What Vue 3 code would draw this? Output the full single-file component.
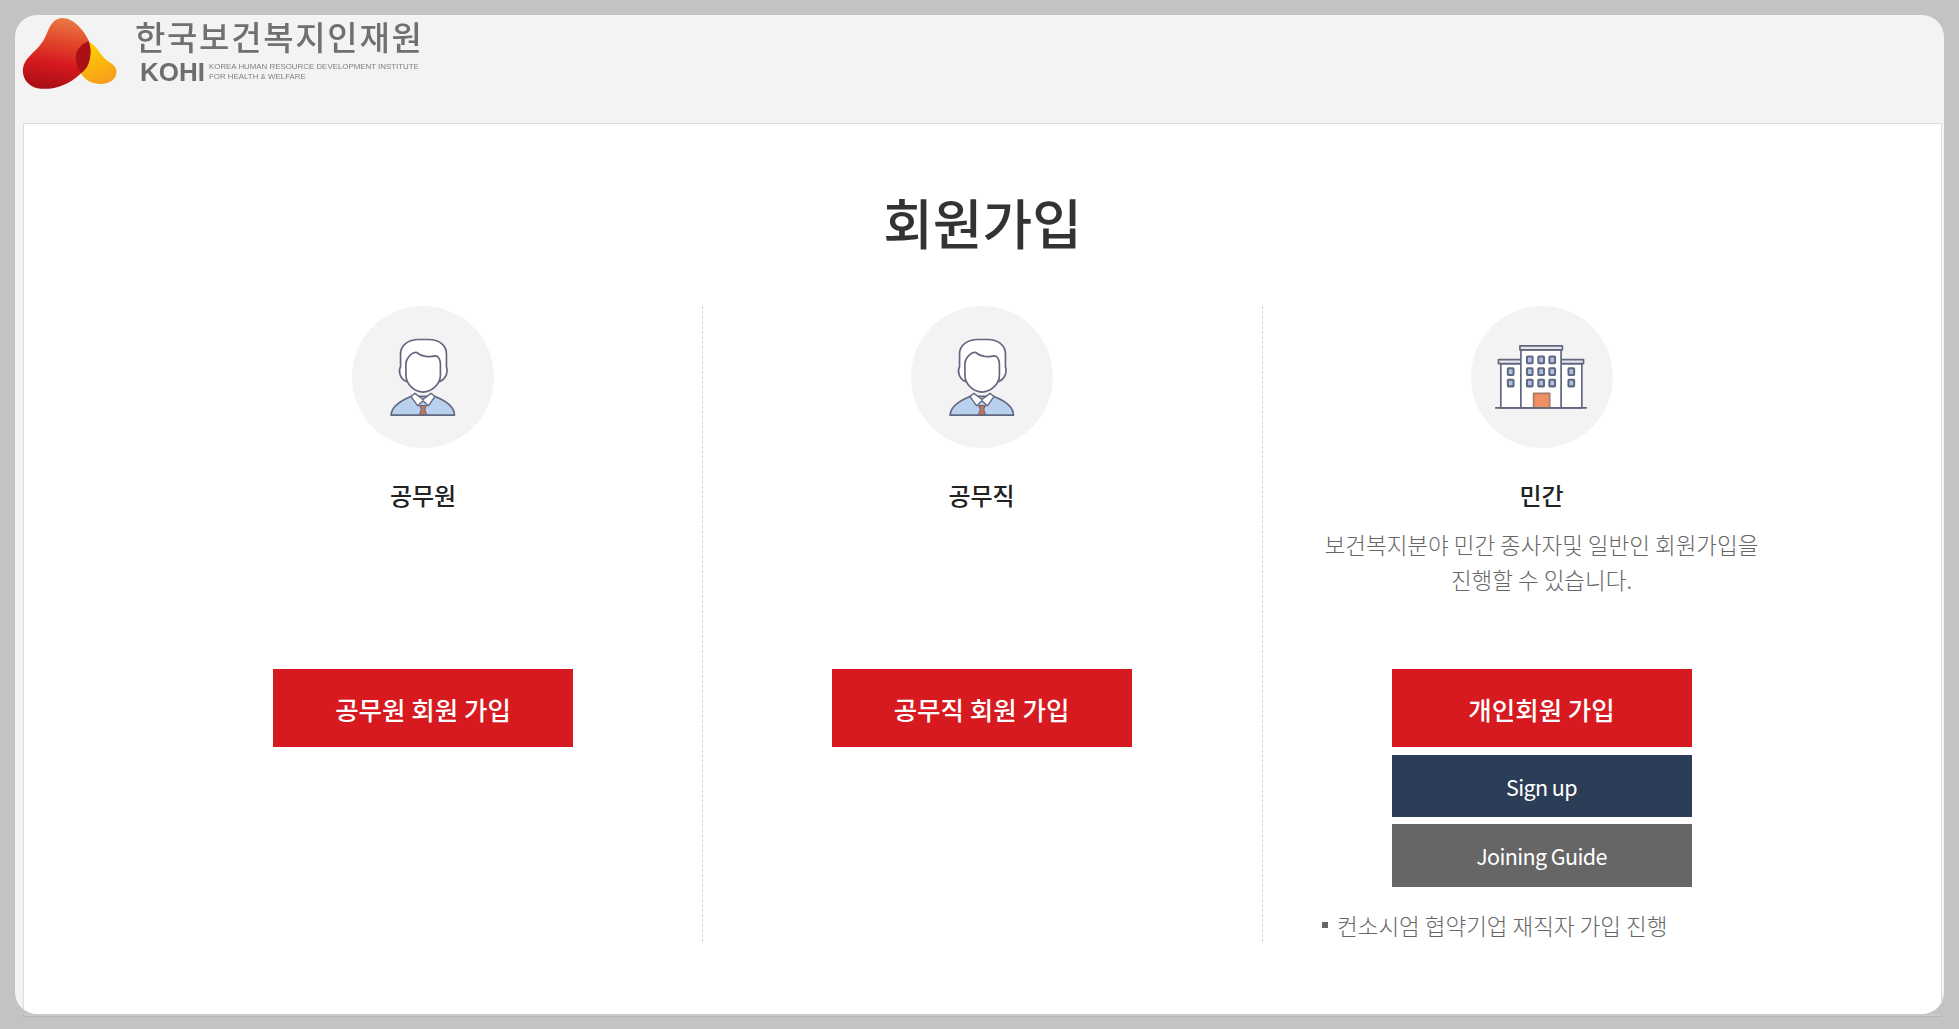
<template>
  <div class="page">
    <div class="frame">
      <div class="card">
        <header class="top">
          <svg class="logo-mark" viewBox="60 45 300 230" width="100" height="77">
            <defs>
              <linearGradient id="redBlob" x1="0.55" y1="0" x2="0.4" y2="1">
                <stop offset="0" stop-color="#ea7a45" />
                <stop offset="0.3" stop-color="#e24a2c" />
                <stop offset="0.65" stop-color="#d5181f" />
                <stop offset="1" stop-color="#a80f14" />
              </linearGradient>
              <linearGradient id="yellowBlob" x1="0.3" y1="0" x2="0.7" y2="1">
                <stop offset="0" stop-color="#ffd400" />
                <stop offset="1" stop-color="#f89c1c" />
              </linearGradient>
            </defs>
            <path d="M266 124C290 135 300 165 322 182C345 195 355 208 347 228C335 252 295 258 268 244C240 228 222 190 232 155C238 138 250 120 266 124Z" fill="url(#yellowBlob)" />
            <path d="M182 54C215 50 250 85 266 122C278 155 270 195 240 222C205 256 155 272 112 264C78 256 62 225 71 195C82 165 118 148 135 112C147 85 155 58 182 54Z" fill="url(#redBlob)" />
            <path d="M266 124C274 145 274 175 262 198C256 208 250 214 244 218C232 205 224 180 229 160C234 142 250 128 266 124Z" fill="#ab1016" />
          </svg>
          <div class="logo-text">
            <div class="logo-ko">한국보건복지인재원</div>
            <div class="logo-en">
              <span class="logo-kohi">KOHI</span>
              <span class="logo-full">KOREA HUMAN RESOURCE DEVELOPMENT INSTITUTE<br />FOR HEALTH &amp; WELFARE</span>
            </div>
          </div>
        </header>

        <main class="panel">
          <h1 class="title">회원가입</h1>
          <div class="cols">
            <section v-for="col in cols" :key="col.name" class="col">
              <div class="circle">
                <svg v-if="col.icon === 'person'" viewBox="36 33 424 424" width="142" height="142">
                  <g stroke="#62667f" stroke-width="5" stroke-linejoin="round" stroke-linecap="round">
                    <path d="M153 359C153 332 185 314 212 303L284 303C312 314 342 332 342 359Z" fill="#b9d0ee" />
                    <path d="M212 303L224 294L248 312L272 294L284 303L264 331L248 316L232 331Z" fill="#fff" stroke-width="4" />
                    <path d="M238 330L258 330L253 342L259 358L237 358L243 342Z" fill="#c8744e" stroke-width="3" />
                    <path d="M197 258C178 248 174 226 181 214L181 176C181 150 205 133 235 133L265 133C295 133 318 150 318 176L318 214C324 228 318 248 300 258Z" fill="#fff" />
                    <path d="M197 206C197 190 215 168 230 172C245 186 270 186 285 182C295 182 300 195 300 206L300 240C300 268 272 290 248 290C224 290 197 268 197 240Z" fill="#fff" />
                  </g>
                </svg>
                <svg v-else viewBox="36 33 424 424" width="142" height="142">
                  <g stroke="#62667f" stroke-width="5" stroke-linejoin="round">
                    <rect x="125" y="205" width="60" height="132" fill="#fff" />
                    <rect x="305" y="205" width="62" height="132" fill="#fff" />
                    <rect x="118" y="193" width="67" height="12" fill="#e6e7ee" />
                    <rect x="305" y="193" width="67" height="12" fill="#e6e7ee" />
                    <rect x="185" y="163" width="120" height="174" fill="#fff" />
                    <rect x="182" y="152" width="127" height="12" fill="#e6e7ee" />
                    <rect x="223" y="294" width="48" height="43" fill="#ef8f63" stroke="#a9796a" />
                    <line x1="108" y1="337" x2="382" y2="337" />
                    <g fill="#a9c2e6" stroke-width="6">
                      <rect v-for="w in windows" :key="w[0] + '-' + w[1]" :x="w[0]" :y="w[1]" width="17" height="20" rx="2" />
                    </g>
                  </g>
                </svg>
              </div>
              <h2 class="name">{{ col.name }}</h2>
              <p class="desc">
                <template v-for="(line, i) in col.desc" :key="i">{{ line }}<br /></template>
              </p>
              <a class="btn red">{{ col.btn }}</a>
              <template v-if="col.extra">
                <a class="btn navy">Sign up</a>
                <a class="btn gray">Joining Guide</a>
                <p class="note"><i></i>컨소시엄 협약기업 재직자 가입 진행</p>
              </template>
            </section>
          </div>
        </main>
      </div>
    </div>
  </div>
</template>

<script setup>
const cols = [
  { name: '공무원', icon: 'person', desc: [], btn: '공무원 회원 가입' },
  { name: '공무직', icon: 'person', desc: [], btn: '공무직 회원 가입' },
  {
    name: '민간',
    icon: 'building',
    desc: ['보건복지분야 민간 종사자및 일반인 회원가입을', '진행할 수 있습니다.'],
    btn: '개인회원 가입',
    extra: true
  }
]

// window positions of the building icon
const windows = []
for (const x of [203, 237, 270]) {
  for (const y of [184, 219, 253]) windows.push([x, y])
}
for (const x of [146, 327]) {
  for (const y of [219, 253]) windows.push([x, y])
}
</script>

<style>
html, body {
  margin: 0;
  background: #c3c3c3;
}
</style>

<style scoped>
.page {
  height: 1029px;
  box-sizing: border-box;
  padding: 15px;
  overflow: hidden;
  font-family: "Noto Sans CJK KR", "Noto Sans", sans-serif;
}

.frame {
  position: relative;
  height: 999px;
}

/* the panel's outline shows a little under the card */
.frame::after {
  content: "";
  position: absolute;
  left: 8px;
  right: 2px;
  bottom: -3px;
  height: 3px;
  box-sizing: border-box;
  background: #c9c9c9;
  border: 1px solid #b5b5b5;
  border-top: none;
}

.card {
  height: 100%;
  display: flex;
  flex-direction: column;
  background: #f3f3f3;
  border-radius: 22px;
  overflow: hidden;
}

.top {
  height: 108px;
  flex: none;
  display: flex;
  align-items: flex-start;
  padding-left: 5px;
  box-sizing: border-box;
  filter: blur(0.35px);
}

.logo-mark {
  flex: none;
}

.logo-text {
  margin-left: 15px;
  color: #707070;
}

.logo-ko {
  font-size: 33px;
  font-weight: 500;
  line-height: 40px;
  letter-spacing: 1.7px;
  margin-top: 1px;
  white-space: nowrap;
}

.logo-en {
  display: flex;
  align-items: center;
  margin-top: 3px;
  padding-left: 5px;
}

.logo-kohi {
  font-family: "Liberation Sans", sans-serif;
  font-size: 26px;
  line-height: 26px;
  font-weight: 700;
  color: #6e6e6e;
}

.logo-full {
  margin-left: 4px;
  font-family: "Liberation Sans", sans-serif;
  font-size: 7.9px;
  line-height: 10px;
  color: #808080;
  white-space: nowrap;
}

.panel {
  flex: 1;
  margin: 0 2px 0 8px;
  background: #fff;
  border: 1px solid #dcdcdc;
  border-bottom: none;
}

.title {
  margin: 0;
  padding-top: 61px;
  height: 121px;
  font-size: 54px;
  font-weight: 500;
  line-height: 74px;
  text-align: center;
  color: #333;
}

.cols {
  width: 1680px;
  margin-left: 118px;
  display: grid;
  grid-template-columns: repeat(3, 560px);
  height: 636px;
}

.col {
  display: flex;
  flex-direction: column;
  align-items: center;
  box-sizing: border-box;
}

.col:first-child {
  padding-left: 2px;
}

.col + .col {
  border-left: 1px dashed #d4d4d4;
  padding-right: 2px;
}

.circle {
  width: 142px;
  height: 142px;
  border-radius: 50%;
  background: #f3f3f3;
  flex: none;
}

.circle svg {
  display: block;
  filter: blur(0.35px);
}

.name {
  margin: 27px 0 0;
  font-size: 24px;
  font-weight: 500;
  line-height: 40px;
  color: #222;
}

.desc {
  margin: 12px 0 0;
  height: 142px;
  font-size: 22.5px;
  font-weight: 300;
  line-height: 35px;
  text-align: center;
  color: #666;
}

.btn {
  width: 300px;
  display: flex;
  align-items: center;
  justify-content: center;
  color: #fff;
}

.red {
  height: 78px;
  background: #d71920;
  font-size: 25.5px;
  font-weight: 500;
}

.navy {
  height: 62px;
  margin-top: 8px;
  background: #2c3e57;
  font-size: 21.5px;
  letter-spacing: -0.6px;
}

.gray {
  height: 63px;
  margin-top: 7px;
  background: #666;
  font-size: 21.5px;
  letter-spacing: -0.6px;
}

.note {
  align-self: flex-start;
  margin: 21px 0 0 59px;
  font-size: 22.5px;
  font-weight: 300;
  line-height: 34px;
  color: #666;
  display: flex;
  align-items: center;
}

.note i {
  width: 6px;
  height: 6px;
  margin-right: 9px;
  background: #666;
}
</style>
